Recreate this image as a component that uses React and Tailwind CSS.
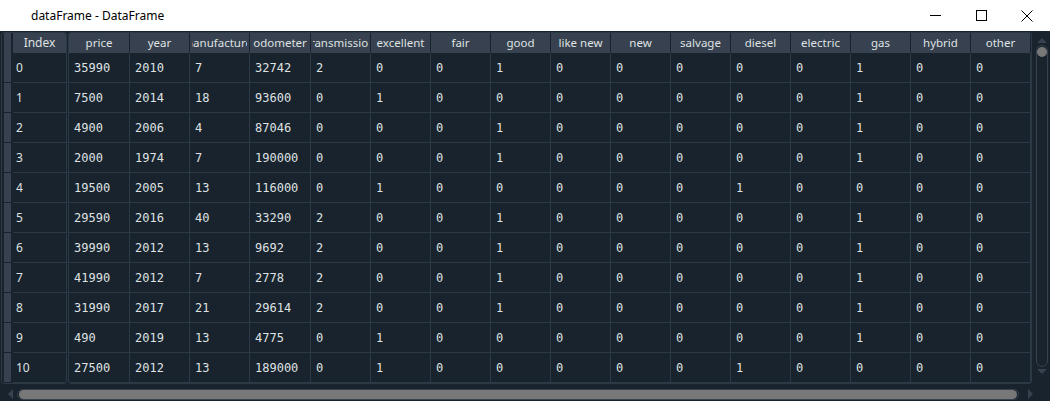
import React from "react";

const columns = ["price", "year", "manufacturer", "odometer", "transmission", "excellent", "fair", "good", "like new", "new", "salvage", "diesel", "electric", "gas", "hybrid", "other"];
const widths = ["w-[61px]", "w-[60px]", "w-[60px]", "w-[61px]", "w-[60px]", "w-[60px]", "w-[60px]", "w-[60px]", "w-[60px]", "w-[60px]", "w-[60px]", "w-[60px]", "w-[60px]", "w-[60px]", "w-[60px]", "w-[60px]"];

const rows = [
  [35990, 2010, 7, 32742, 2, 0, 0, 1, 0, 0, 0, 0, 0, 1, 0, 0],
  [7500, 2014, 18, 93600, 0, 1, 0, 0, 0, 0, 0, 0, 0, 1, 0, 0],
  [4900, 2006, 4, 87046, 0, 0, 0, 1, 0, 0, 0, 0, 0, 1, 0, 0],
  [2000, 1974, 7, 190000, 0, 0, 0, 1, 0, 0, 0, 0, 0, 1, 0, 0],
  [19500, 2005, 13, 116000, 0, 1, 0, 0, 0, 0, 0, 1, 0, 0, 0, 0],
  [29590, 2016, 40, 33290, 2, 0, 0, 1, 0, 0, 0, 0, 0, 1, 0, 0],
  [39990, 2012, 13, 9692, 2, 0, 0, 1, 0, 0, 0, 0, 0, 1, 0, 0],
  [41990, 2012, 7, 2778, 2, 0, 0, 1, 0, 0, 0, 0, 0, 1, 0, 0],
  [31990, 2017, 21, 29614, 2, 0, 0, 1, 0, 0, 0, 0, 0, 1, 0, 0],
  [490, 2019, 13, 4775, 0, 1, 0, 0, 0, 0, 0, 0, 0, 1, 0, 0],
  [27500, 2012, 13, 189000, 0, 1, 0, 0, 0, 0, 0, 1, 0, 0, 0, 0],
];

const sans = { fontFamily: '"Noto Sans", "Open Sans", sans-serif' };
const mono = { fontFamily: '"DejaVu Sans Mono", monospace' };

function TitleBar() {
  return (
    <div className="h-[31px] bg-white flex items-center shrink-0">
      <div className="pl-[31px] text-[12px] text-black flex-1" style={sans}>dataFrame - DataFrame</div>
      <div className="flex h-full">
        <div className="w-[46px] flex items-center justify-center">
          <div className="w-[11px] h-px bg-black" />
        </div>
        <div className="w-[46px] flex items-center justify-center">
          <div className="w-[11px] h-[11px] border border-black" />
        </div>
        <div className="w-[46px] flex items-center justify-center">
          <svg width="12" height="12" viewBox="0 0 12 12">
            <path d="M0.5 0.5 L11.5 11.5 M11.5 0.5 L0.5 11.5" stroke="black" strokeWidth="1" />
          </svg>
        </div>
      </div>
    </div>
  );
}

function IndexPanel() {
  return (
    <div className="w-[66px] ml-[1px] border border-[#2d3945] rounded-[3px] flex flex-col pl-[2px] overflow-hidden">
      <div className="h-[20px] flex shrink-0">
        <div className="w-[7px] bg-[#37414f] mr-[2px]" />
        <div className="flex-1 bg-[#37414f] flex items-center justify-center text-[12px] text-[#dfe1e2]" style={sans}>Index</div>
      </div>
      {rows.map((_, i) => (
        <div key={i} className="h-[30px] flex shrink-0">
          <div className="w-[7px] bg-[#37414f] border-b border-[#19232d] mr-[2px]" />
          <div className="flex-1 border-b border-[#2d3945] flex items-center pl-[3px] text-[12px] text-[#dfe1e2]" style={sans}>{i}</div>
        </div>
      ))}
    </div>
  );
}

function MainTable() {
  return (
    <div className="w-[964px] ml-[1px] border border-[#2d3945] rounded-[3px] flex flex-col overflow-hidden">
      <div className="h-[20px] flex shrink-0">
        {columns.map((c, j) => (
          <div key={c} className={`${widths[j]} shrink-0 bg-[#37414f] border-r border-[#19232d] flex items-center justify-center px-[2px]`}>
            <div className="w-full flex justify-center overflow-hidden whitespace-nowrap text-[11.5px] text-[#dfe1e2]" style={sans}>
              <span className="shrink-0">{c}</span>
            </div>
          </div>
        ))}
      </div>
      {rows.map((r, i) => (
        <div key={i} className="h-[30px] flex shrink-0">
          {r.map((v, j) => (
            <div key={j} className={`${widths[j]} shrink-0 border-r border-b border-[#2d3945] flex items-center pl-[5px] text-[12px] text-[#dfe1e2]`} style={mono}>
              {v}
            </div>
          ))}
        </div>
      ))}
    </div>
  );
}

function VScroll() {
  return (
    <div className="w-[12px] ml-[4px] flex flex-col items-center pt-[5px]">
      <svg width="10" height="6" viewBox="0 0 10 6"><path d="M0 6 L5 1 L10 6 Z" fill="#37414f" /></svg>
      <div className="w-[12px] h-[322px] mt-[2px] border border-[#37414f] rounded-[6px] pt-[1px] flex justify-center">
        <div className="w-[10px] h-[10px] rounded-full bg-[#787878]" />
      </div>
      <svg className="mt-[2px]" width="10" height="6" viewBox="0 0 10 6"><path d="M0 0 L5 5 L10 0 Z" fill="#37414f" /></svg>
    </div>
  );
}

function HScroll() {
  return (
    <div className="h-[12px] mt-[4px] flex items-center shrink-0">
      <svg className="ml-[7px]" width="6" height="10" viewBox="0 0 6 10"><path d="M6 0 L1 5 L6 10 Z" fill="#37414f" /></svg>
      <div className="ml-[4px] w-[1002px] h-[11px] border border-[#37414f] rounded-[6px] flex items-center px-px">
        <div className="w-full h-[9px] rounded-[5px] bg-[#787878]" />
      </div>
      <svg className="ml-[9px]" width="6" height="10" viewBox="0 0 6 10"><path d="M0 0 L5 5 L0 10 Z" fill="#37414f" /></svg>
    </div>
  );
}

export default function App() {
  return (
    <div className="w-[1050px] h-[401px] bg-[#19232d] flex flex-col overflow-hidden">
      <TitleBar />
      <div className="flex pt-[1px] shrink-0">
        <IndexPanel />
        <MainTable />
        <VScroll />
      </div>
      <HScroll />
    </div>
  );
}
